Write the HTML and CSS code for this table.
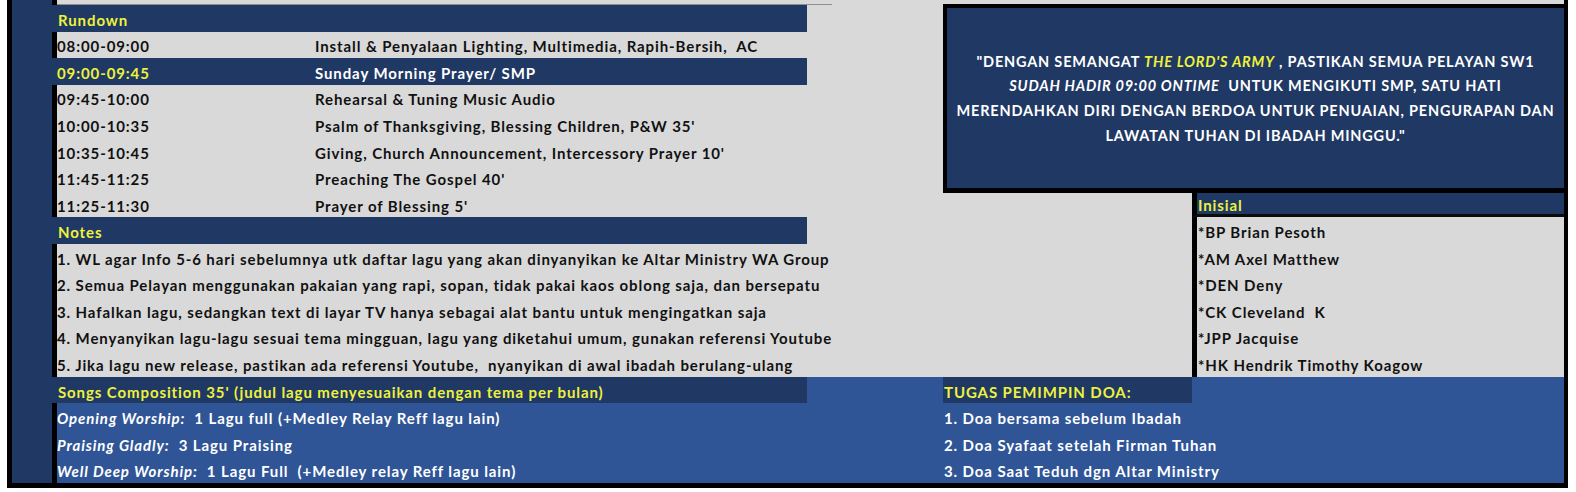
FILE: index.html
```html
<!DOCTYPE html>
<html lang="id">
<head>
<meta charset="utf-8">
<title>Rundown Ibadah</title>
<link rel="stylesheet" href="styles.css">
</head>
<body>
<div class="sheet">
  <div class="gutter"></div>
  <div class="strip"><span class="strip-line"></span></div>

  <div class="quote">
    <p>"DENGAN SEMANGAT <i class="yel">THE LORD'S ARMY</i> , PASTIKAN SEMUA PELAYAN SW1<br><i>SUDAH HADIR 09:00 ONTIME</i>&nbsp; UNTUK MENGIKUTI SMP, SATU HATI<br>MERENDAHKAN DIRI DENGAN BERDOA UNTUK PENUAIAN, PENGURAPAN DAN<br>LAWATAN TUHAN DI IBADAH MINGGU."</p>
  </div>

  <div class="cell head navy yel">Rundown</div>

  <div class="cell time">08:00-09:00</div>
  <div class="cell desc">Install &amp; Penyalaan Lighting, Multimedia, Rapih-Bersih,  AC</div>

  <div class="cell time navy yel">09:00-09:45</div>
  <div class="cell desc navy">Sunday Morning Prayer/ SMP</div>

  <div class="cell time">09:45-10:00</div>
  <div class="cell desc">Rehearsal &amp; Tuning Music Audio</div>

  <div class="cell time">10:00-10:35</div>
  <div class="cell desc">Psalm of Thanksgiving, Blessing Children, P&amp;W 35'</div>

  <div class="cell time">10:35-10:45</div>
  <div class="cell desc">Giving, Church Announcement, Intercessory Prayer 10'</div>

  <div class="cell time">11:45-11:25</div>
  <div class="cell desc">Preaching The Gospel 40'</div>

  <div class="cell time">11:25-11:30</div>
  <div class="cell desc">Prayer of Blessing 5'</div>
  <div class="cell init init-head navy yel">Inisial</div>

  <div class="cell head navy yel">Notes</div>
  <div class="cell init">*BP Brian Pesoth</div>

  <div class="cell note">1. WL agar Info 5-6 hari sebelumnya utk daftar lagu yang akan dinyanyikan ke Altar Ministry WA Group</div>
  <div class="cell init">*AM Axel Matthew</div>

  <div class="cell note">2. Semua Pelayan menggunakan pakaian yang rapi, sopan, tidak pakai kaos oblong saja, dan bersepatu</div>
  <div class="cell init">*DEN Deny</div>

  <div class="cell note">3. Hafalkan lagu, sedangkan text di layar TV hanya sebagai alat bantu untuk mengingatkan saja</div>
  <div class="cell init">*CK Cleveland  K</div>

  <div class="cell note">4. Menyanyikan lagu-lagu sesuai tema mingguan, lagu yang diketahui umum, gunakan referensi Youtube</div>
  <div class="cell init">*JPP Jacquise</div>

  <div class="cell note">5. Jika lagu new release, pastikan ada referensi Youtube,  nyanyikan di awal ibadah berulang-ulang</div>
  <div class="cell init">*HK Hendrik Timothy Koagow</div>

  <div class="cell head navy yel">Songs Composition 35' (judul lagu menyesuaikan dengan tema per bulan)</div>
  <div class="cell gap blue"></div>
  <div class="cell task-head navy yel">TUGAS PEMIMPIN DOA:</div>
  <div class="cell tail blue"></div>

  <div class="cell song blue"><i>Opening Worship:</i>  1 Lagu full (+Medley Relay Reff lagu lain)</div>
  <div class="cell task blue">1. Doa bersama sebelum Ibadah</div>

  <div class="cell song blue"><i>Praising Gladly:</i>  3 Lagu Praising</div>
  <div class="cell task blue">2. Doa Syafaat setelah Firman Tuhan</div>

  <div class="cell song blue"><i>Well Deep Worship:</i>  1 Lagu Full  (+Medley relay Reff lagu lain)</div>
  <div class="cell task blue">3. Doa Saat Teduh dgn Altar Ministry</div>
</div>
</body>
</html>
```

FILE: styles.css
```css
* {
  box-sizing: border-box;
  margin: 0;
  padding: 0;
}

html,
body {
  background: #ffffff;
}

body {
  width: 1576px;
  height: 492px;
  overflow: hidden;
  font-family: "Lato", "Liberation Sans", sans-serif;
  font-weight: 700;
  font-size: 15px;
  letter-spacing: 0.9px;
  color: #111111;
}

.sheet {
  margin-left: 7px;
  width: 1561px;
  height: 488px;
  border-left: 5px solid #000000;
  border-right: 4px solid #000000;
  border-bottom: 5px solid #000000;
  background: #d9d9d9;
  display: grid;
  grid-template-columns: 40px 261px 494px 136px 249px 372px;
  grid-template-rows: 5px repeat(18, 1fr);
}

.gutter {
  grid-column: 1 / 2;
  grid-row: 1 / -1;
  background: #1f3864;
}

.strip {
  grid-column: 2 / 7;
  grid-row: 1 / 2;
  border-left: 5px solid #000000;
}

.strip-line {
  display: block;
  width: 775px;
  height: 5px;
  border-bottom: 1px solid #8e8e8e;
}

.quote {
  grid-column: 5 / 7;
  grid-row: 2 / 9;
  margin-top: -1px;
  margin-bottom: -2px;
  background: #1f3864;
  border: 4px solid #000000;
  border-right: 0;
  border-bottom-width: 5px;
  color: #ffffff;
  display: flex;
  align-items: center;
  justify-content: center;
  text-align: center;
  font-size: 14.5px;
  line-height: 24.7px;
  letter-spacing: 0.8px;
  padding-top: 2px;
}

.cell {
  display: flex;
  align-items: center;
  white-space: pre;
  overflow: visible;
  padding-top: 3px;
  min-width: 0;
}

.navy {
  background: #1f3864;
  color: #ffffff;
}

.blue {
  background: #2f5597;
  color: #ffffff;
}

.yel {
  color: #eef23c;
}

.head {
  grid-column: 2 / 4;
  padding-left: 6px;
}

.time {
  grid-column: 2 / 3;
  border-left: 5px solid #000000;
}

.time.navy {
  border-left-color: #1f3864;
}

.desc {
  grid-column: 3 / 4;
  padding-left: 2px;
}

.note {
  grid-column: 2 / 6;
  border-left: 5px solid #000000;
}

.init {
  grid-column: 6 / 7;
  border-left: 5px solid #000000;
  padding-left: 1px;
}

.init-head {
  margin-top: 2px;
  border-bottom: 3px solid #0c0c0c;
}

.gap {
  grid-column: 4 / 5;
}

.task-head {
  grid-column: 5 / 6;
  padding-left: 1px;
}

.tail {
  grid-column: 6 / 7;
}

.song {
  grid-column: 2 / 5;
  border-left: 5px solid #000000;
}

.task {
  grid-column: 5 / 7;
  padding-left: 1px;
}
```
